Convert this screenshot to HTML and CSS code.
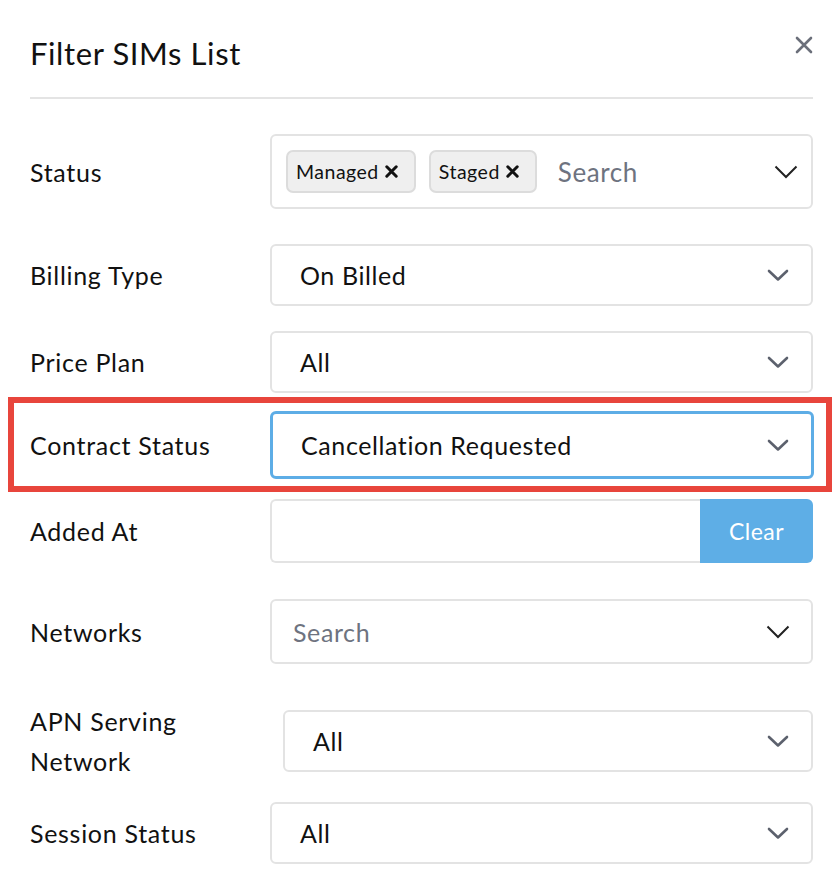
FILE: index.html
```html
<!DOCTYPE html>
<html>
<head>
<meta charset="utf-8">
<link rel="stylesheet" href="styles.css">
</head>
<body>
<div class="panel">
  <div class="header">
    <h1 class="title">Filter SIMs List</h1>
    <button class="close" aria-label="Close">
      <svg width="18" height="18" viewBox="0 0 18 18"><path d="M2 2 L16 16 M16 2 L2 16" stroke="#6b6f7a" stroke-width="2.6" stroke-linecap="round"/></svg>
    </button>
  </div>

  <div class="row row-status">
    <div class="label">Status</div>
    <div class="field field-multi">
      <span class="tag">Managed <svg class="tag-x" width="13" height="13" viewBox="0 0 13 13"><path d="M1.8 1.8 L11.2 11.2 M11.2 1.8 L1.8 11.2" stroke="#111" stroke-width="3" stroke-linecap="round"/></svg></span>
      <span class="tag">Staged <svg class="tag-x" width="13" height="13" viewBox="0 0 13 13"><path d="M1.8 1.8 L11.2 11.2 M11.2 1.8 L1.8 11.2" stroke="#111" stroke-width="3" stroke-linecap="round"/></svg></span>
      <span class="placeholder">Search</span>
      <svg class="chev chev-dark" width="24" height="14" viewBox="0 0 24 14"><path d="M1.5 1.5 L12 12 L22.5 1.5" fill="none" stroke="#222" stroke-width="2"/></svg>
    </div>
  </div>

  <div class="row row-billing">
    <div class="label">Billing Type</div>
    <div class="field field-select">
      <span class="value">On Billed</span>
      <svg class="chev" width="22" height="13" viewBox="0 0 22 13"><path d="M2 2 L11 10.5 L20 2" fill="none" stroke="#5c616d" stroke-width="2.6" stroke-linecap="round" stroke-linejoin="round"/></svg>
    </div>
  </div>

  <div class="row row-price">
    <div class="label">Price Plan</div>
    <div class="field field-select">
      <span class="value">All</span>
      <svg class="chev" width="22" height="13" viewBox="0 0 22 13"><path d="M2 2 L11 10.5 L20 2" fill="none" stroke="#5c616d" stroke-width="2.6" stroke-linecap="round" stroke-linejoin="round"/></svg>
    </div>
  </div>

  <div class="row row-contract">
    <div class="label">Contract Status</div>
    <div class="field field-select field-focus">
      <span class="value">Cancellation Requested</span>
      <svg class="chev" width="22" height="13" viewBox="0 0 22 13"><path d="M2 2 L11 10.5 L20 2" fill="none" stroke="#5c616d" stroke-width="2.6" stroke-linecap="round" stroke-linejoin="round"/></svg>
    </div>
  </div>

  <div class="row row-added">
    <div class="label">Added At</div>
    <div class="field-group">
      <div class="field field-input"></div>
      <button class="clear">Clear</button>
    </div>
  </div>

  <div class="row row-networks">
    <div class="label">Networks</div>
    <div class="field field-select field-search">
      <span class="placeholder">Search</span>
      <svg class="chev chev-dark" width="24" height="14" viewBox="0 0 24 14"><path d="M1.5 1.5 L12 12 L22.5 1.5" fill="none" stroke="#222" stroke-width="2"/></svg>
    </div>
  </div>

  <div class="row row-apn">
    <div class="label label-wrap">APN Serving Network</div>
    <div class="field field-select">
      <span class="value">All</span>
      <svg class="chev" width="22" height="13" viewBox="0 0 22 13"><path d="M2 2 L11 10.5 L20 2" fill="none" stroke="#5c616d" stroke-width="2.6" stroke-linecap="round" stroke-linejoin="round"/></svg>
    </div>
  </div>

  <div class="row row-session">
    <div class="label">Session Status</div>
    <div class="field field-select">
      <span class="value">All</span>
      <svg class="chev" width="22" height="13" viewBox="0 0 22 13"><path d="M2 2 L11 10.5 L20 2" fill="none" stroke="#5c616d" stroke-width="2.6" stroke-linecap="round" stroke-linejoin="round"/></svg>
    </div>
  </div>
</div>
</body>
</html>
```

FILE: styles.css
```css
* { box-sizing: border-box; }

html, body {
  margin: 0;
  padding: 0;
  background: #ffffff;
}

body {
  font-family: "Lato", "Open Sans", sans-serif;
  color: #111111;
  width: 840px;
  height: 892px;
  overflow: hidden;
}

.panel {
  padding: 0 27px 0 30px;
}

.header {
  display: flex;
  justify-content: space-between;
  align-items: flex-start;
  height: 99px;
  border-bottom: 2px solid #e4e4e4;
}

.title {
  margin: 34px 0 0 0;
  font-size: 31px;
  font-weight: 400;
  letter-spacing: 0.6px;
  line-height: 38px;
  color: #111;
}

.close {
  margin: 36px 0 0 0;
  padding: 0;
  border: none;
  background: none;
  width: 18px;
  height: 18px;
  display: flex;
}

.row {
  display: flex;
  align-items: center;
}

.label {
  width: 240px;
  flex: none;
  font-size: 25px;
  letter-spacing: 0.7px;
  line-height: 40px;
  color: #111;
}

.field {
  flex: 1;
  display: flex;
  align-items: center;
  border: 2px solid #e3e3e3;
  border-radius: 6px;
  background: #fff;
  font-size: 25px;
  letter-spacing: 0.6px;
}

.field-select {
  height: 62px;
  padding: 0 22px 0 28px;
}

.value {
  flex: 1;
  color: #111;
}

.chev { flex: none; }

.chev-dark { margin-right: -1px; }

.placeholder {
  flex: 1;
  color: #6e7380;
}

.row-status { margin-top: 35px; }

.field-multi {
  height: 75px;
  padding: 0 14px 0 14px;
  gap: 13px;
}

.field-multi .placeholder {
  margin-left: 8px;
  font-size: 26px;
}

.tag {
  display: inline-flex;
  align-items: center;
  height: 43px;
  padding: 0 16px 0 8px;
  border: 2px solid #dcdcdc;
  border-radius: 7px;
  background: #efefef;
  font-size: 19.5px;
  letter-spacing: 0.5px;
  color: #111;
  gap: 6px;
}

.tag-x { flex: none; }

.row-billing { margin-top: 35px; }
.row-price { margin-top: 25px; }

.row-contract {
  margin: 4px -19px 0 -22px;
  padding: 8px 12px 7px 16px;
  border: 6px solid #e8453c;
}

.field-focus {
  height: 68px;
  border: 3px solid #5dade6;
  padding-left: 28px;
  padding-right: 22px;
}

.row-added { margin-top: 7px; }

.field-group {
  flex: 1;
  display: flex;
  height: 64px;
}

.field-input {
  border-radius: 6px 0 0 6px;
  border-right: none;
  height: 64px;
}

.clear {
  width: 113px;
  flex: none;
  border: none;
  border-radius: 0 6px 6px 0;
  background: #5eaee6;
  color: #ffffff;
  font-family: "Lato", "Open Sans", sans-serif;
  font-size: 23px;
  letter-spacing: 0.5px;
  padding: 0;
}

.row-networks { margin-top: 36px; }

.field-search {
  height: 65px;
  padding-left: 21px;
}

.row-apn { margin-top: 37px; }

.label-wrap {
  width: 253px;
  padding-right: 80px;
}

.row-session { margin-top: 21px; }
```
